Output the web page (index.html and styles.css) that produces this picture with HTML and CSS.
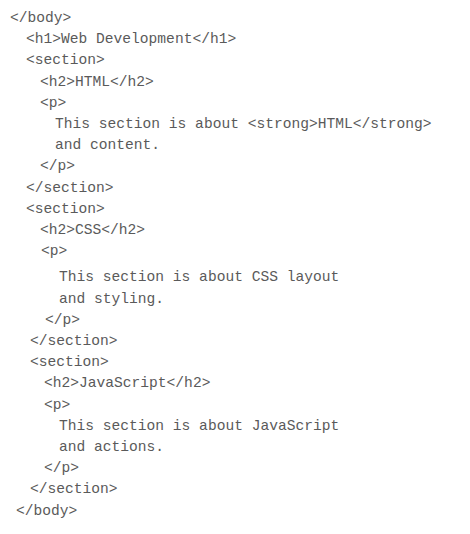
FILE: index.html
```html
<!DOCTYPE html>
<html>
<head>
<meta charset="utf-8">
<link rel="stylesheet" href="styles.css">
</head>
<body>
<div class="code">
  <div class="ln x10">&lt;/body&gt;</div>
  <div class="ln x26">&lt;h1&gt;Web Development&lt;/h1&gt;</div>
  <div class="ln x26">&lt;section&gt;</div>
  <div class="ln x40">&lt;h2&gt;HTML&lt;/h2&gt;</div>
  <div class="ln x40">&lt;p&gt;</div>
  <div class="ln x55">This section is about &lt;strong&gt;HTML&lt;/strong&gt;</div>
  <div class="ln x55">and content.</div>
  <div class="ln x40">&lt;/p&gt;</div>
  <div class="ln x26">&lt;/section&gt;</div>
  <div class="ln x26">&lt;section&gt;</div>
  <div class="ln x40">&lt;h2&gt;CSS&lt;/h2&gt;</div>
  <div class="ln x41">&lt;p&gt;</div>
  <div class="ln x59 gap">This section is about CSS layout</div>
  <div class="ln x59">and styling.</div>
  <div class="ln x45">&lt;/p&gt;</div>
  <div class="ln x30">&lt;/section&gt;</div>
  <div class="ln x30">&lt;section&gt;</div>
  <div class="ln x44">&lt;h2&gt;JavaScript&lt;/h2&gt;</div>
  <div class="ln x44">&lt;p&gt;</div>
  <div class="ln x59">This section is about JavaScript</div>
  <div class="ln x59">and actions.</div>
  <div class="ln x44">&lt;/p&gt;</div>
  <div class="ln x30">&lt;/section&gt;</div>
  <div class="ln x16">&lt;/body&gt;</div>
</div>
</body>
</html>
```
FILE: styles.css
```css
html, body {
  margin: 0;
  background: #ffffff;
}
.code {
  padding-top: 8px;
  font-family: "Liberation Mono", "Courier New", monospace;
  font-size: 14.6px;
  line-height: 21.2px;
  color: #5a5a5a;
  white-space: nowrap;
}
.ln { display: block; }
.gap { margin-top: 5px; }
.x10 { padding-left: 10px; }
.x16 { padding-left: 16px; }
.x26 { padding-left: 26px; }
.x30 { padding-left: 30px; }
.x40 { padding-left: 40px; }
.x41 { padding-left: 41px; }
.x44 { padding-left: 44px; }
.x45 { padding-left: 45px; }
.x55 { padding-left: 55px; }
.x59 { padding-left: 59px; }
```
